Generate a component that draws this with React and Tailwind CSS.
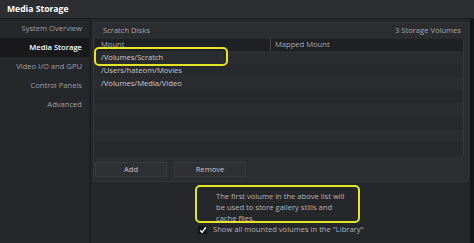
import React from "react";

const NAV_ITEMS = [
  { id: "overview", label: "System Overview" },
  { id: "media", label: "Media Storage", active: true },
  { id: "video", label: "Video I/O and GPU" },
  { id: "panels", label: "Control Panels" },
  { id: "advanced", label: "Advanced" },
];

const MOUNTS = ["/Volumes/Scratch", "/Users/hateom/Movies", "/Volumes/Media/Video", "", "", "", "", ""];

const NavItem = ({ item }) => {
  const base = "h-[19px] flex items-center justify-end pr-[7px] whitespace-nowrap";
  if (item.active) {
    return <div className={`${base} bg-[#19191b] text-white font-semibold`}>{item.label}</div>;
  }
  return <div className={`${base} text-[#9fa0a4]`}>{item.label}</div>;
};

const App = () => {
  return (
    <div
      className="relative w-[474px] h-[243px] overflow-hidden bg-[#26272b] flex flex-col text-[7.6px] leading-none"
      style={{ fontFamily: '"Open Sans", "Noto Sans", sans-serif' }}
    >
      {/* Title bar */}
      <div className="h-[19px] shrink-0 bg-[#2d2e32] border-b border-[#1b1c1f] flex items-center px-[7px] text-white font-bold text-[8.6px]">
        Media Storage
      </div>

      <div className="flex flex-1 min-h-0">
        {/* Sidebar */}
        <div className="w-[91px] shrink-0 border-r-2 border-[#1e1f22]">
          {NAV_ITEMS.map((item) => (
            <NavItem key={item.id} item={item} />
          ))}
        </div>

        {/* Main */}
        <div className="flex-1 flex flex-col pl-[2px] pr-[1px] pt-[3px]">
          <div className="h-[160px] bg-[#2c2d31] border border-[#34353a] rounded-[2px] flex flex-col px-[1px]">
            <div className="h-[16px] flex items-center justify-between pl-[8px] pr-[6px] text-[#a3a5aa]">
              <span>Scratch Disks</span>
              <span>3 Storage Volumes</span>
            </div>

            <div className="h-[118px] mr-[3px] bg-[#28292d] border-r border-[#36373b] flex flex-col">
              <div className="h-[12px] shrink-0 bg-[#1f2023] flex items-center text-[#a9abaf]">
                <div className="w-[176px] pl-[6px] border-r border-[#45464b] h-full flex items-center">Mount</div>
                <div className="pl-[4px]">Mapped Mount</div>
              </div>
              {MOUNTS.map((m, i) => (
                <div
                  key={i}
                  className={`h-[13px] shrink-0 flex items-center pl-[6px] text-[#c9cacd] ${i % 2 === 0 ? "bg-[#2b2c30]" : "bg-[#28292d]"}`}
                >
                  {m}
                </div>
              ))}
            </div>

            <div className="flex gap-[7px] mt-[5px]">
              <button className="w-[72px] h-[15px] bg-[#2f3034] border border-[#393a3e] text-[#c3c4c7] flex items-center justify-center">
                Add
              </button>
              <button className="w-[72px] h-[15px] bg-[#2f3034] border border-[#393a3e] text-[#c3c4c7] flex items-center justify-center">
                Remove
              </button>
            </div>
          </div>

          {/* Info */}
          <div className="ml-[118px] mt-[9px] text-[#b4b5b8]">
            <div className="pl-[5px] leading-[11px]">
              The first volume in the above list will
              <br />
              be used to store gallery stills and
              <br />
              cache files.
            </div>
            <div className="flex items-center gap-[6px] mt-[2px] ml-[-13px]">
              <span className="w-[9px] h-[8px] bg-[#121214] flex items-center justify-center">
                <svg width="8" height="8" viewBox="0 0 8 8">
                  <path d="M1.2 4.3 L3.1 6.4 L6.8 1.2" fill="none" stroke="#ffffff" strokeWidth="1.5" />
                </svg>
              </span>
              <span>Show all mounted volumes in the "Library"</span>
            </div>
          </div>
        </div>
        <div className="w-[4px] shrink-0 bg-[#141517]" />
      </div>

      {/* Annotation highlights */}
      <div className="absolute left-[94px] top-[47px] w-[134px] h-[19px] border-2 border-[#e4e428] rounded-[5px]" />
      <div className="absolute left-[195px] top-[185px] w-[165px] h-[38px] border-2 border-[#e4e428] rounded-[5px]" />
    </div>
  );
};

export default App;
